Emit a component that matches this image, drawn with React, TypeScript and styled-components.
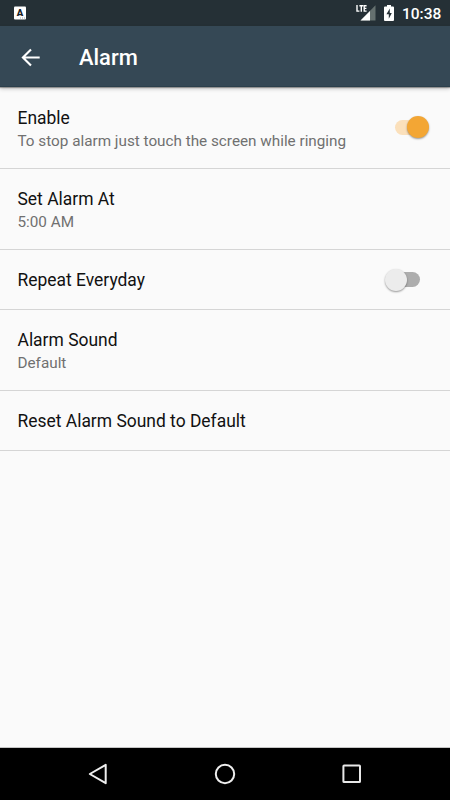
import React from "react";
import styled, { createGlobalStyle } from "styled-components";

const GlobalStyle = createGlobalStyle`
  * { box-sizing: border-box; }
  body { margin: 0; background: #fafafa; font-family: Roboto, "Liberation Sans", sans-serif; }
`;

const Screen = styled.div`
  display: flex;
  flex-direction: column;
  width: 450px;
  height: 800px;
  overflow: hidden;
  background: #fafafa;
`;

const StatusBar = styled.div`
  display: flex;
  flex: none;
  align-items: center;
  justify-content: space-between;
  height: 26px;
  padding: 0 9px 0 13px;
  background: #253036;
`;

const StatusIcons = styled.div`
  display: flex;
  align-items: center;
  gap: 8px;
  height: 26px;
`;

const Clock = styled.time`
  width: 39px;
  padding-top: 3px;
  color: #fff;
  font-size: 15.5px;
  font-weight: 500;
  line-height: 23px;
  white-space: nowrap;
`;

const Toolbar = styled.header`
  display: flex;
  flex: none;
  align-items: center;
  z-index: 1;
  height: 61px;
  padding-left: 18px;
  border-bottom: 1px solid #2c404c;
  background: #354855;
  box-shadow: 0 1px 1px rgba(0, 0, 0, 0.3), 0 2px 4px rgba(0, 0, 0, 0.2);
`;

const BackButton = styled.button`
  display: flex;
  width: 26px;
  height: 26px;
  margin-top: 1px;
  padding: 0;
  border: 0;
  background: none;
`;

const Title = styled.h1`
  margin: 3px 0 0 35px;
  color: #fff;
  font-size: 21.9px;
  font-weight: 500;
  line-height: 26px;
`;

const Settings = styled.main`
  flex: 1;
  padding-top: 1px;
`;

const Row = styled.div<{ $tall?: boolean }>`
  display: flex;
  align-items: center;
  justify-content: space-between;
  height: ${({ $tall }) => ($tall ? 81 : 60)}px;
  padding: 1px 18px 0 17.5px;
  border-bottom: 1px solid #d5d5d5;
`;

const TextBlock = styled.div`
  padding-top: 1px;
`;

const Label = styled.div`
  color: #111;
  font-size: 17.44px;
  line-height: 24px;
  white-space: nowrap;
`;

const Summary = styled.div`
  color: #707070;
  font-size: 15.28px;
  line-height: 22px;
  white-space: nowrap;
`;

const Switch = styled.button<{ $on?: boolean }>`
  display: flex;
  align-items: center;
  justify-content: ${({ $on }) => ($on ? "flex-end" : "flex-start")};
  width: 33px;
  height: 15px;
  margin: ${({ $on }) => ($on ? "0 4px 3px 0" : "0 12px 1px 0")};
  padding: 0;
  border: 0;
  border-radius: 8px;
  background: ${({ $on }) => ($on ? "#fbe0bb" : "#adadad")};
`;

const Thumb = styled.span<{ $on?: boolean }>`
  flex: none;
  width: 22px;
  height: 22px;
  border-radius: 50%;
  margin: ${({ $on }) => ($on ? "0 -1px 0 0" : "0 0 0 -2px")};
  background: ${({ $on }) => ($on ? "#f3a634" : "#ececec")};
  box-shadow: 0 1px 2px rgba(0, 0, 0, 0.4);
`;

const NavBar = styled.nav`
  display: flex;
  flex: none;
  height: 53px;
  padding: 0 35px 1px;
  border-top: 1px solid #c4c4c4;
  background: #000;
`;

const NavButton = styled.button`
  display: flex;
  flex: 1;
  align-items: center;
  justify-content: center;
  padding: 0;
  border: 0;
  background: none;
`;

function Toggle({ on, label }: { on?: boolean; label: string }) {
  return (
    <Switch $on={on} role="switch" aria-checked={!!on} aria-label={label}>
      <Thumb $on={on} />
    </Switch>
  );
}

const NotificationIcon = () => (
  <svg width="14" height="26" viewBox="0 0 14 26">
    <rect x="1" y="6.5" width="12" height="13" rx="1" fill="#fff" />
    <text x="6.9" y="16.2" textAnchor="middle" fontSize="9.5" fontWeight="900" fill="#182126">A</text>
    <path d="M7 18h1m1 0h1m1 0h1" stroke="#89939a" strokeWidth=".8" />
  </svg>
);

const SignalIcon = () => (
  <svg width="20" height="26" viewBox="0 0 20 26">
    <path d="M19.5 5.3v15.2h-15z" fill="#65706f" />
    <path d="M14 10.9v9.6H4.5z" fill="#fff" />
    <path d="M1 5.1v6h2.4M3.4 5.7h3.8M5.3 5.7v6M10.6 5.7H8.2v5.4h2.4M8.2 8.4h2.2" fill="none" stroke="#fff" strokeWidth="1.4" />
  </svg>
);

const BatteryIcon = () => (
  <svg width="10" height="26" viewBox="0 0 10 26">
    <path d="M3 5h4v1.5h2q1 0 1 1v12.4q0 1-1 1H1q-1 0-1-1V7.5q0-1 1-1h2z" fill="#fff" />
    <path d="M5.8 8.6 2.4 14.3h2.4v4.4l3-5.7H5.8z" fill="#253036" />
  </svg>
);

export default function App() {
  return (
    <>
      <GlobalStyle />
      <Screen>
        <StatusBar>
          <NotificationIcon />
          <StatusIcons>
            <SignalIcon />
            <BatteryIcon />
            <Clock>10:38</Clock>
          </StatusIcons>
        </StatusBar>
        <Toolbar>
          <BackButton aria-label="Back">
            <svg width="26" height="26" viewBox="0 0 26 26">
              <path d="M21.7 13.5H5.5M13 5.4l-8.1 8.1 8.1 8.1" fill="none" stroke="#fff" strokeWidth="2.1" />
            </svg>
          </BackButton>
          <Title>Alarm</Title>
        </Toolbar>
        <Settings>
          <Row $tall>
            <TextBlock>
              <Label>Enable</Label>
              <Summary>To stop alarm just touch the screen while ringing</Summary>
            </TextBlock>
            <Toggle on label="Enable" />
          </Row>
          <Row $tall>
            <TextBlock>
              <Label>Set Alarm At</Label>
              <Summary>5:00 AM</Summary>
            </TextBlock>
          </Row>
          <Row>
            <Label>Repeat Everyday</Label>
            <Toggle label="Repeat Everyday" />
          </Row>
          <Row $tall>
            <TextBlock>
              <Label>Alarm Sound</Label>
              <Summary>Default</Summary>
            </TextBlock>
          </Row>
          <Row>
            <Label>Reset Alarm Sound to Default</Label>
          </Row>
        </Settings>
        <NavBar>
          <NavButton aria-label="Back">
            <svg width="22" height="24" viewBox="0 0 22 24">
              <path d="M18.7 2.8v18.4L2.8 12z" fill="none" stroke="#eee" strokeWidth="2" strokeLinejoin="round" />
            </svg>
          </NavButton>
          <NavButton aria-label="Home">
            <svg width="22" height="24" viewBox="0 0 22 24">
              <circle cx="11" cy="12" r="9.2" fill="none" stroke="#eee" strokeWidth="2" />
            </svg>
          </NavButton>
          <NavButton aria-label="Overview">
            <svg width="22" height="24" viewBox="0 0 22 24">
              <rect x="2.4" y="3.5" width="16.6" height="16.6" rx=".7" fill="none" stroke="#e8e8e8" strokeWidth="2" />
            </svg>
          </NavButton>
        </NavBar>
      </Screen>
    </>
  );
}
